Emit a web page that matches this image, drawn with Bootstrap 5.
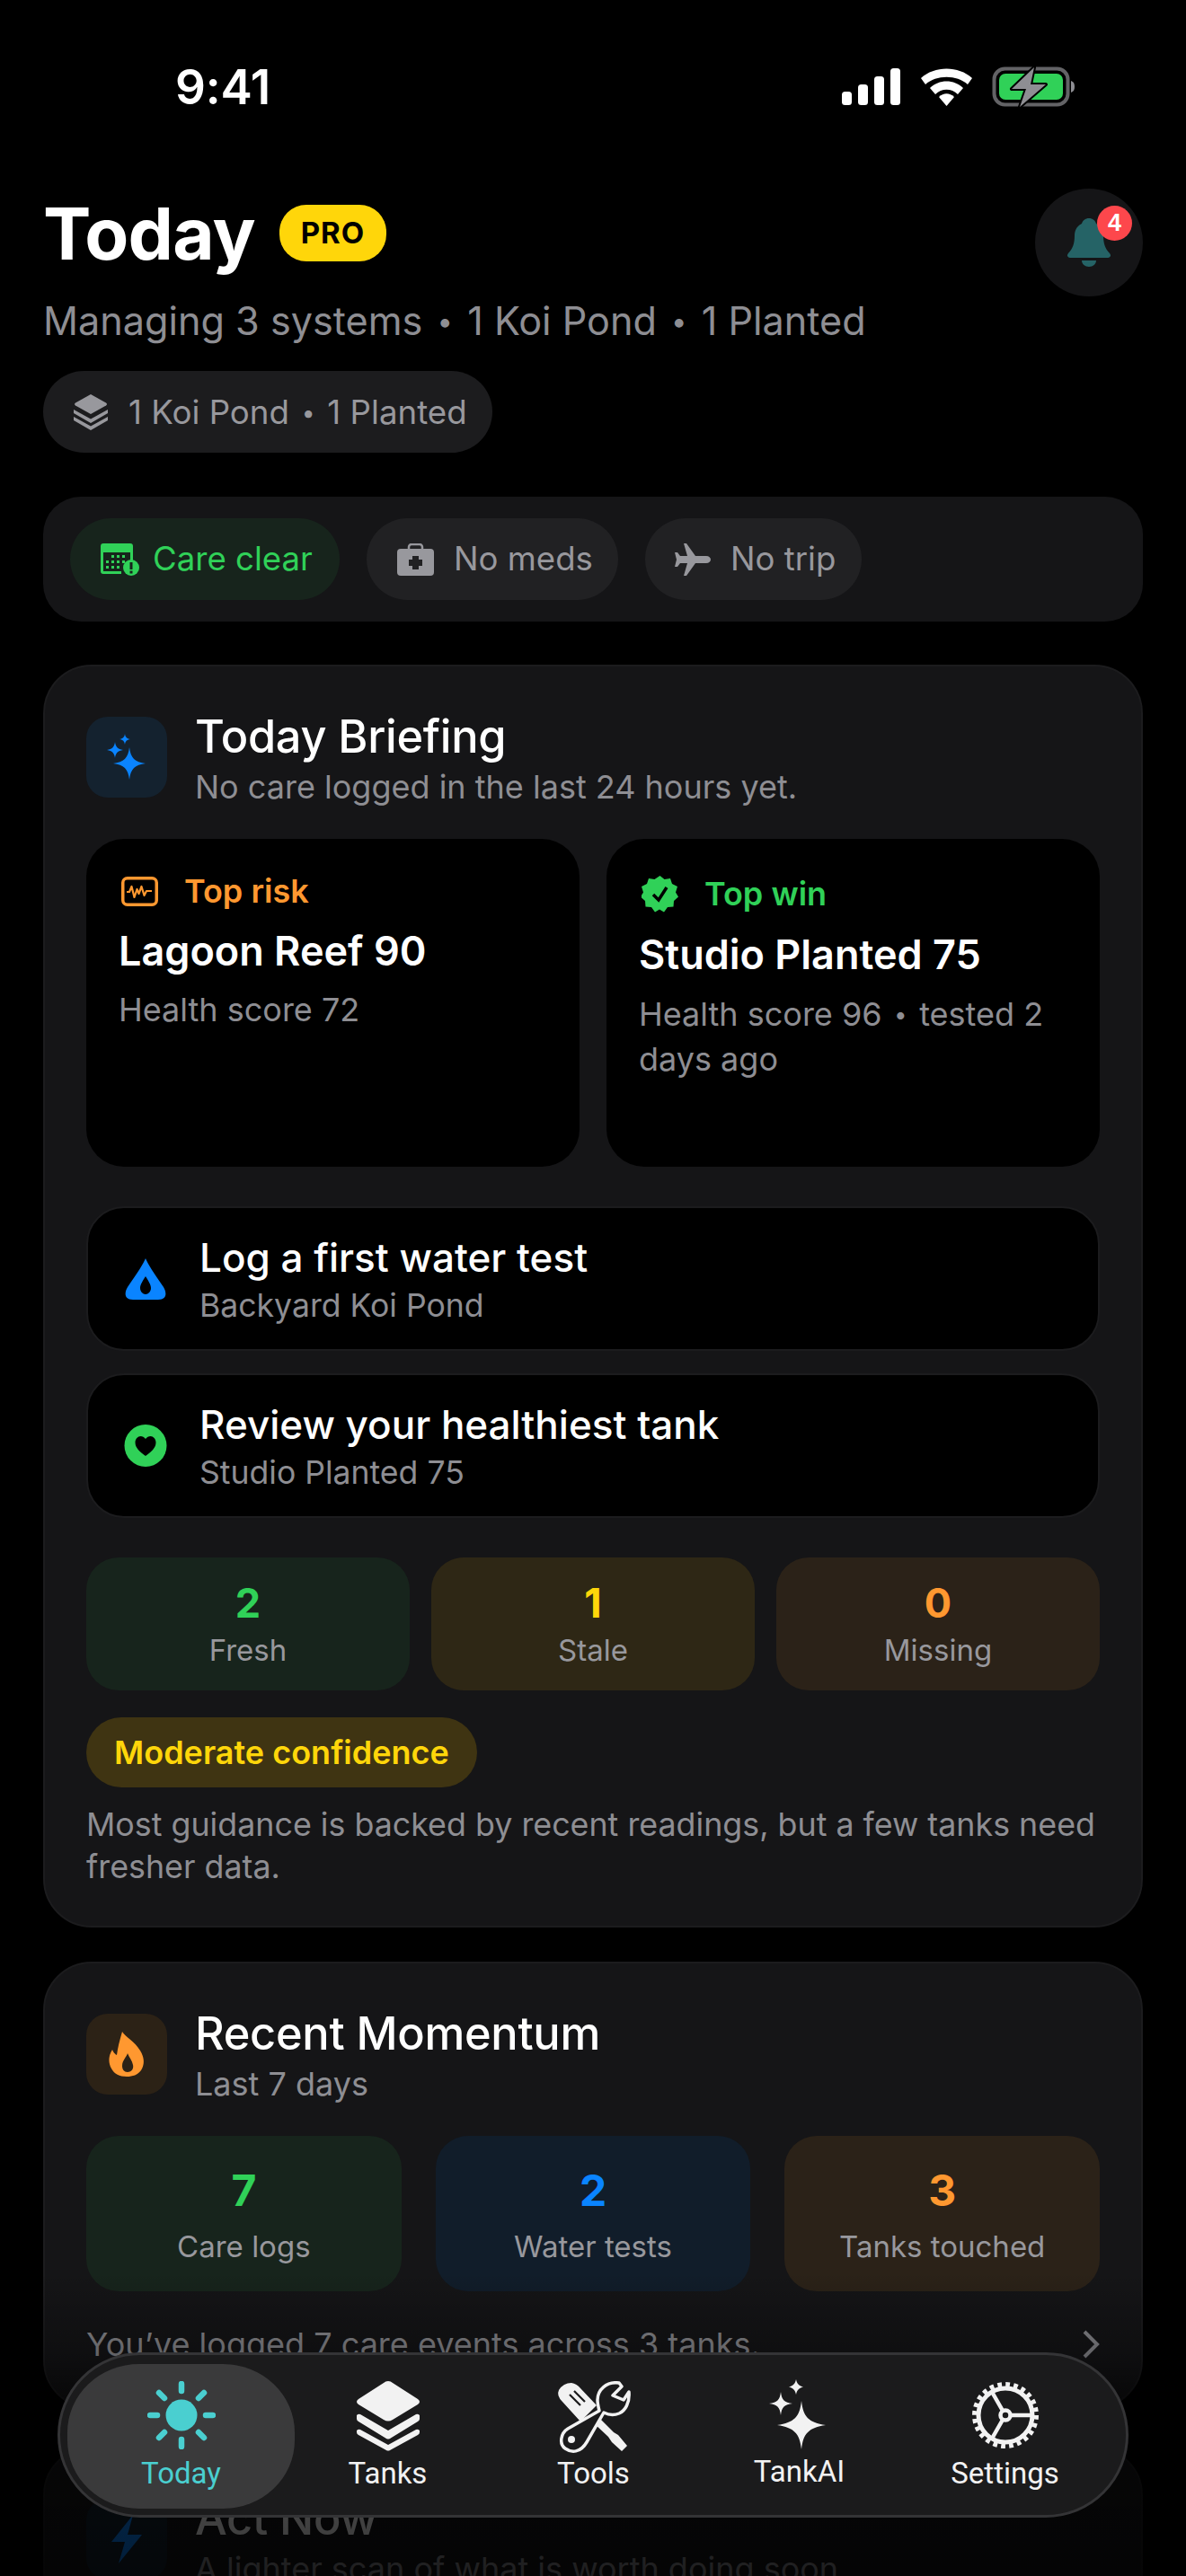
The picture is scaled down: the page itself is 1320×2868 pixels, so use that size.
<!DOCTYPE html>
<html lang="en">
<head>
<meta charset="utf-8">
<title>Today</title>
<link href="https://cdn.jsdelivr.net/npm/bootstrap@5.3.0/dist/css/bootstrap.min.css" rel="stylesheet">
<style>
html,body{background:#000;margin:0;overflow:hidden}
body{font-family:"Inter","Liberation Sans",sans-serif;color:#fff}
.phone{position:relative;width:1320px;height:2868px;overflow:hidden;background:#000}
.statusbar{height:210px;padding:66px 0 0 195px}
.clock{font-size:53px;font-weight:600;line-height:62px;letter-spacing:-.2px}
.status-icons{position:absolute;left:937px;top:74px;width:262px;height:46px}
.content{padding:0 48px}
.hero-title{font-size:80px;font-weight:700;line-height:92px;padding-top:4px;letter-spacing:-.8px}
.pro-tag{background:#ffd60a;color:#000;font-size:33px;font-weight:700;width:119px;height:63px;border-radius:30px;letter-spacing:1px;margin-left:27px;margin-top:3px}
.bell-btn{position:relative;width:120px;height:120px;border-radius:50%;background:#151517;flex:none}
.bell-count{position:absolute;left:69px;top:19px;width:39px;height:39px;border-radius:50%;background:#fd474c;color:#fff;font:700 27px/39px "Liberation Sans",sans-serif;text-align:center;padding:0}
.hero-sub{font-size:43.200px;line-height:54px;color:#8e8e93;margin-top:24px}
.sep-dot{font-size:.72em;line-height:0;vertical-align:.12em;padding:0 .13em}
.sys-pill{height:91px;width:500px;border-radius:46px;background:#1c1c1e;color:#98989d;font-size:36.700px;margin-top:29px;padding-left:34px;gap:23px}
.care-strip{height:139px;background:#151517;border-radius:42px;margin-top:49px;padding:24px 30px;gap:30px}
.care-pill{height:91px;border-radius:46px;background:#212123;color:#98989d;font-size:36.600px;gap:22px}
.care-pill.good{background:#17241c;color:#30d158;gap:14px}
.panel{background:#151517;border:2px solid #1c1c1e;border-radius:54px;padding:56px 46px 0;color:#fff}
.panel-one{height:1406px;margin-top:48px}
.panel-two{height:498px;margin-top:38px}
.panel-three{height:498px;margin-top:42px}
.panel-head{height:90px;gap:31px}
.icon-tile{width:90px;height:90px;border-radius:24px;flex:none}
.tile-blue{background:#14222f}.tile-orange{background:#2c2216}
.panel-title{font-size:50.500px;font-weight:500;line-height:60px;letter-spacing:-.3px;margin-top:-8px}
.panel-sub{font-size:36px;line-height:44px;color:#8e8e93;margin-top:4px}
.top-cards{gap:30px;margin-top:46px}
.top-card{flex:1 1 0;height:365px;background:#000;border-radius:42px;padding:36px}
.top-label{font-size:36px;font-weight:600;line-height:44px;gap:29px;padding-left:3px}
.top-name{font-size:45px;font-weight:600;line-height:56px;margin-top:17px}
.top-detail{font-size:36px;line-height:50px;color:#8e8e93;margin-top:12px}
.act-row{height:161px;background:#000;border:2px solid #1c1c1e;border-radius:42px;padding:0 40px;gap:36px}
.act-row+.act-row{margin-top:25px}
.act-stack{margin-top:44px}
.act-title{font-size:44px;font-weight:500;line-height:56px}
.act-sub{font-size:35.600px;line-height:44px;color:#8e8e93;margin-top:4px}
.tiles{gap:24px;margin-top:44px}
.stat-tile{flex:1 1 0;height:148px;border-radius:36px;text-align:center}
.stat-num{font-size:45px;font-weight:700;line-height:56px;padding-top:23px}
.stat-lab{font-size:33px;line-height:44px;color:#98989d;margin-top:2px}
.tall .stat-tile{height:173px}
.tall{gap:38px;margin-top:46px}
.tall .stat-num{font-size:48px;line-height:60px;padding-top:31px}
.tall .stat-lab{margin-top:10px}
.bg-g{background:#17241c}.bg-y{background:#2e2715}.bg-o{background:#2b2218}.bg-b{background:#111d2a}
.c-g{color:#30d158}.c-y{color:#ffd60a}.c-o{color:#ff9830}.c-b{color:#0a84ff}
.conf-pill{display:inline-flex;align-items:center;height:78px;padding:0 31px;border-radius:39px;background:#3f3412;color:#ffd60a;font-size:36px;font-weight:600;margin-top:30px}
.note{font-size:35.800px;line-height:47px;color:#8e8e93;margin-top:18px}
.foot-line{font-size:36px;line-height:44px;color:#8e8e93;margin-top:37px}
.fade-layer{position:absolute;left:0;right:0;top:2530px;bottom:0;background:linear-gradient(180deg,rgba(0,0,0,0) 0,rgba(0,0,0,.3) 90px,rgba(0,0,0,.68) 150px,rgba(0,0,0,.78) 100%)}
.tabbar{position:absolute;left:64px;top:2619px;width:1192px;height:184px;border-radius:92px;background:#1b1b1c;border:3px solid #343436;padding:10px 8px}
.tab{width:229px;flex:none;text-align:center;font-family:"Roboto","Liberation Sans",sans-serif;font-size:33px;line-height:36px;color:#f2f2f2}
.tab svg{display:block;margin:0 auto}
.tab-on{width:253px;height:161px;border-radius:80px/76px;background:#3a3a3b;color:#4acfd0;margin-right:-11px}
.tab-shift{padding-top:19px}
</style>
</head>
<body>
<div class="phone">
  <div class="statusbar"><div class="clock">9:41</div></div>
  <svg class="status-icons" viewBox="0 0 262 46" aria-hidden="true">
    <g fill="#fff">
      <rect x="0" y="28" width="11" height="15" rx="3.5"/><rect x="18" y="20" width="11" height="23" rx="3.5"/><rect x="36" y="11" width="11" height="32" rx="3.5"/><rect x="54" y="2" width="11" height="41" rx="3.5"/>
      <path d="M88 13C103-1 130-1 145 13L140 20C128 9 105 9 93 20Z"/>
      <path d="M98 24C108 14 125 14 135 24L129 31C122 24 111 24 104 31Z"/>
      <path d="M108 34C113 29 120 29 125 34L116.500 44Z"/>
    </g>
    <rect x="169.500" y="2.500" width="82" height="40" rx="12" fill="none" stroke="#636366" stroke-width="4"/>
    <rect x="175" y="8" width="71" height="29" rx="7" fill="#30d158"/>
    <path d="M255 16c3 1 4 3 4 6.500s-1 5.500-4 6.500z" fill="#8e8e93"/>
    <path d="M214 1L189 25H205L198 45L227 20H210Z" fill="#8e8e93" stroke="#000" stroke-width="4" stroke-linejoin="round" paint-order="stroke"/>
  </svg>

  <main class="content">
    <div class="d-flex justify-content-between align-items-start">
      <div>
        <div class="d-flex align-items-center">
          <div class="hero-title">Today</div>
          <span class="pro-tag d-flex align-items-center justify-content-center">PRO</span>
        </div>
        <div class="hero-sub">Managing 3 systems <span class="sep-dot">•</span> 1 Koi Pond <span class="sep-dot">•</span> 1 Planted</div>
        <div class="sys-pill d-flex align-items-center">
          <svg width="38" height="40" viewBox="0 0 38 40" fill="#98989d" aria-hidden="true"><path d="M19 0L36 9.500Q38 11 36 12.500L19 22L2 12.500Q0 11 2 9.500Z"/><path d="M0 17L19 27.500L38 17V21L19 32L0 21Z"/><path d="M0 25L19 35.500L38 25V29L19 40L0 29Z"/></svg>
          <span>1 Koi Pond <span class="sep-dot">•</span> 1 Planted</span>
        </div>
      </div>
      <div class="bell-btn d-flex align-items-center justify-content-center">
        <svg width="50" height="54" viewBox="0 0 50 54" fill="#256366" aria-hidden="true"><path d="M25 0c4 0 7 2.500 8 6 5 2.500 8 7 8 13 0 9 2 15 7 20 2 2 1 5-2 5H4c-3 0-4-3-2-5 5-5 7-11 7-20 0-6 3-10.500 8-13 1-3.500 4-6 8-6z"/><path d="M17 47h16c0 4-3.500 7-8 7s-8-3-8-7z"/></svg>
        <span class="bell-count">4</span>
      </div>
    </div>

    <div class="care-strip d-flex">
      <div class="care-pill good d-flex align-items-center" style="width:300px;padding-left:34px">
        <svg width="44" height="36" viewBox="0 0 44 36" aria-hidden="true"><path d="M3 0h30a3 3 0 0 1 3 3v17h-3V10H3v21h20v3H3a3 3 0 0 1-3-3V3a3 3 0 0 1 3-3z" fill="#30d158"/><g fill="#30d158"><rect x="12" y="13" width="3" height="3"/><rect x="18" y="13" width="3" height="3"/><rect x="24" y="13" width="3" height="3"/><rect x="6" y="19" width="3" height="3"/><rect x="12" y="19" width="3" height="3"/><rect x="18" y="19" width="3" height="3"/><rect x="24" y="19" width="3" height="3"/><rect x="6" y="25" width="3" height="3"/><rect x="12" y="25" width="3" height="3"/><rect x="18" y="25" width="3" height="3"/></g><circle cx="34" cy="27" r="9" fill="#30d158"/><rect x="32.500" y="21" width="3" height="8" fill="#17241c"/><rect x="32.500" y="30.500" width="3" height="3" fill="#17241c"/></svg>
        <span>Care clear</span>
      </div>
      <div class="care-pill d-flex align-items-center" style="width:280px;padding-left:34px">
        <svg width="41" height="36" viewBox="0 0 41 36" aria-hidden="true"><path d="M13 7V4a3 3 0 0 1 3-3h9a3 3 0 0 1 3 3v3" fill="none" stroke="#98989d" stroke-width="2.500"/><rect y="6" width="41" height="30" rx="4" fill="#98989d"/><path d="M17 14h7v4h4v7h-4v4h-7v-4h-4v-7h4z" fill="#212123"/></svg>
        <span>No meds</span>
      </div>
      <div class="care-pill d-flex align-items-center" style="width:241px;padding-left:32px">
        <svg width="41" height="36" viewBox="0 0 41 36" fill="#98989d" aria-hidden="true"><path d="M11 0h3l10 14h12c3 0 5 2 5 4s-2 4-5 4H24L14 36h-3l4-14H7l-3 4H1l2-8-2-8h3l3 4h8z"/></svg>
        <span>No trip</span>
      </div>
    </div>

    <section class="card panel panel-one">
      <div class="panel-head d-flex">
        <div class="icon-tile tile-blue d-flex align-items-center justify-content-center">
          <svg width="54" height="56" viewBox="0 0 54 56" fill="#0a84ff" aria-hidden="true"><path d="M30 17C31.500 29 36 33.500 48 35 36 36.500 31.500 41 30 53 28.500 41 24 36.500 12 35 24 33.500 28.500 29 30 17Z"/><path d="M14 11C14.700 16.500 17 19 23 20 17 21 14.700 23.500 14 29 13.300 23.500 11 21 5 20 11 19 13.300 16.500 14 11Z"/><path d="M25 2C25.500 5.700 27 7.300 31 8 27 8.700 25.500 10.300 25 14 24.500 10.300 23 8.700 19 8 23 7.300 24.500 5.700 25 2Z"/></svg>
        </div>
        <div>
          <div class="panel-title">Today Briefing</div>
          <div class="panel-sub">No care logged in the last 24 hours yet.</div>
        </div>
      </div>

      <div class="top-cards d-flex">
        <div class="top-card">
          <div class="top-label c-o d-flex align-items-center">
            <svg width="41" height="33" viewBox="0 0 41 33" fill="none" stroke="#ff9830" aria-hidden="true"><rect x="1.750" y="1.750" width="37.500" height="29.500" rx="5" stroke-width="3.500"/><path d="M6 17h3l2.500-6 3 12 3-9 2 5 3-8 3 10 2.500-5h6" stroke-width="2.200" stroke-linejoin="round"/></svg>
            <span>Top risk</span>
          </div>
          <div class="top-name">Lagoon Reef 90</div>
          <div class="top-detail">Health score 72</div>
        </div>
        <div class="top-card">
          <div class="top-label c-g d-flex align-items-center" style="padding-top:3px">
            <svg width="41" height="41" viewBox="0 0 41 41" aria-hidden="true"><path d="M20.500 0l5 4 6.500-1 2 6 6 3-2 6.500 3 5-5 4.500-.5 6.500-6.500.5-4 5.500-5-3-5 3-4-5.500-6.500-.5-.5-6.500-5-4.500 3-5-2-6.500 6-3 2-6 6.500 1z" fill="#30d158"/><path d="M13 21l6 6 9-14" fill="none" stroke="#000" stroke-width="3.500"/></svg>
            <span>Top win</span>
          </div>
          <div class="top-name" style="margin-top:18px">Studio Planted 75</div>
          <div class="top-detail" style="margin-top:13px">Health score 96 <span class="sep-dot">•</span> <span>tested 2</span> <span>days ago</span></div>
        </div>
      </div>

      <div class="act-stack">
        <div class="act-row d-flex align-items-center">
          <svg width="48" height="46" viewBox="0 0 48 46" style="flex:none" aria-hidden="true"><path fill-rule="evenodd" fill="#0a84ff" d="M24 0c3 7 9 16 20 32 3 5 5 14-6 14H10C-1 46 1 37 4 32 15 16 21 7 24 0zM24 20c-3 5-6 9-6 13s3 7 6 7 6-3 6-7-3-8-6-13z"/></svg>
          <div>
            <div class="act-title">Log a first water test</div>
            <div class="act-sub">Backyard Koi Pond</div>
          </div>
        </div>
        <div class="act-row d-flex align-items-center">
          <svg width="48" height="47" viewBox="0 0 47 47" style="flex:none" aria-hidden="true"><circle cx="23.500" cy="23.500" r="23.500" fill="#30d158"/><path d="M23.500 35C17 30 12 26 12 20c0-4 3-7 6-7 2 0 4 1 5.500 3 1.500-2 3.500-3 5.500-3 3 0 6 3 6 7 0 6-5 10-11.500 15z" fill="#000"/></svg>
          <div>
            <div class="act-title">Review your healthiest tank</div>
            <div class="act-sub">Studio Planted 75</div>
          </div>
        </div>
      </div>

      <div class="tiles d-flex">
        <div class="stat-tile bg-g"><div class="stat-num c-g">2</div><div class="stat-lab">Fresh</div></div>
        <div class="stat-tile bg-y"><div class="stat-num c-y">1</div><div class="stat-lab">Stale</div></div>
        <div class="stat-tile bg-o"><div class="stat-num c-o">0</div><div class="stat-lab">Missing</div></div>
      </div>
      <div><span class="conf-pill">Moderate confidence</span></div>
      <p class="note mb-0">Most guidance is backed by recent readings, but a few tanks need fresher data.</p>
    </section>

    <section class="card panel panel-two">
      <div class="panel-head d-flex">
        <div class="icon-tile tile-orange d-flex align-items-center justify-content-center">
          <svg width="40" height="50" viewBox="0 0 40 50" aria-hidden="true"><path fill-rule="evenodd" fill="#ff9830" d="M15 0c4 6 14 11 20 21 5 8 5 16 1 22-4 5-9 7-16 7-8 0-14-3-17-9-4-7-3-15 1-21 1 3 3 5 5 6 1-8 3-16 6-26zM21 24c-1 4-6 8-6 14 0 4 2 7 6 7s7-3 6-8c-1-5-4-8-6-13z"/></svg>
        </div>
        <div>
          <div class="panel-title">Recent Momentum</div>
          <div class="panel-sub">Last 7 days</div>
        </div>
      </div>
      <div class="tiles tall d-flex">
        <div class="stat-tile bg-g"><div class="stat-num c-g">7</div><div class="stat-lab">Care logs</div></div>
        <div class="stat-tile bg-b"><div class="stat-num c-b">2</div><div class="stat-lab">Water tests</div></div>
        <div class="stat-tile bg-o"><div class="stat-num c-o">3</div><div class="stat-lab">Tanks touched</div></div>
      </div>
      <div class="foot-line d-flex justify-content-between align-items-center">
        <span>You’ve logged 7 care events across 3 tanks.</span>
        <svg width="20" height="32" viewBox="0 0 20 32" fill="none" stroke="#8e8e93" stroke-width="4" aria-hidden="true"><path d="M3 2l14 14L3 30"/></svg>
      </div>
    </section>

    <section class="card panel panel-three">
      <div class="panel-head d-flex">
        <div class="icon-tile tile-blue d-flex align-items-center justify-content-center">
          <svg width="34" height="54" viewBox="0 0 34 54" fill="#0a84ff" aria-hidden="true"><path d="M24 0L0 30H15L8 54L34 22H18Z"/></svg>
        </div>
        <div>
          <div class="panel-title">Act Now</div>
          <div class="panel-sub">A lighter scan of what is worth doing soon.</div>
        </div>
      </div>
    </section>
  </main>

  <div class="fade-layer"></div>

  <nav class="tabbar d-flex align-items-start">
    <div class="tab tab-on tab-shift">
      <svg width="76" height="76" viewBox="0 0 76 76" aria-hidden="true"><circle cx="38" cy="38" r="17.500" fill="#4acfd0"/><g stroke="#4acfd0" stroke-width="6.500" stroke-linecap="round"><path d="M38 3v8M38 65v8M3 38h8M65 38h8M13 13l6 6M57 57l6 6M13 63l6-6M57 19l6-6"/></g></svg>
      <div style="margin-top:9px">Today</div>
    </div>
    <div class="tab tab-shift">
      <svg width="72" height="78" viewBox="0 0 72 78" fill="#f2f2f2" aria-hidden="true"><path d="M36 0Q39 0 41 2L69 20Q73 23 69 26L41 43Q36 46 31 43L3 26Q-1 23 3 20L31 2Q33 0 36 0Z"/><path d="M1 38Q3 36 5 37L36 55 67 37Q69 36 71 38V42Q71 44 69 45L38 64Q36 65 34 64L3 45Q1 44 1 42Z"/><path d="M1 55Q3 53 5 54L36 71 67 54Q69 53 71 55V57Q71 59 69 60L38 77Q36 78 34 77L3 60Q1 59 1 57Z"/></svg>
      <div style="margin-top:7px">Tanks</div>
    </div>
    <div class="tab tab-shift">
      <svg width="84" height="82" viewBox="37 22 84 82" aria-hidden="true"><path d="M40 32Q45 24 54 24 60 25 64 30L82 49 64 67 44 45Q37 38 40 32Z" fill="#f2f2f2"/><path d="M52 37L64 49M57 33L69 45" stroke="#1b1b1c" stroke-width="2.200"/><path d="M84 62L101 79 106 82 116 94 110 100 99 90 95 84 78 68Z" fill="#f2f2f2"/><path d="M107 24C93 22 83 32 83 43 83 47 84 51 85 55L50 75C42 80 40 92 47 97 54 102 64 102 71 90L90 57C96 60 102 60 107 58 114 55 119 46 118 34L112 43 100 38 110 28Z" fill="#1b1b1c" stroke="#f2f2f2" stroke-width="3.500" stroke-linejoin="round"/><circle cx="54" cy="87" r="4" fill="#f2f2f2"/></svg>
      <div style="margin-top:3px">Tools</div>
    </div>
    <div class="tab tab-shift">
      <svg width="76" height="84" viewBox="0 0 76 84" fill="#f2f2f2" style="margin-top:-2px" aria-hidden="true"><path d="M40 24C42 42 48 48 67 51 48 54 42 60 40 78 38 60 32 54 13 51 32 48 38 42 40 24Z"/><path d="M17 14C18 23 21 26 30 27 21 28 18 31 17 40 16 31 13 28 4 27 13 26 16 23 17 14Z"/><path d="M34 0C35 5 37 7 42 8.500 37 10 35 12 34 17 33 12 31 10 26 8.500 31 7 33 5 34 0Z"/></svg>
      <div style="margin-top:1px">TankAI</div>
    </div>
    <div class="tab tab-shift">
      <svg width="76" height="76" viewBox="0 0 76 76" fill="none" stroke="#f2f2f2" aria-hidden="true"><circle cx="38" cy="38" r="30" stroke-width="5"/><circle cx="38" cy="38" r="34" stroke-width="6" stroke-dasharray="4.700 4.200"/><circle cx="38" cy="38" r="5.500" stroke-width="4.500"/><path d="M44 38H68M35 33L23 12M35 43L23 64" stroke-width="4.500"/></svg>
      <div style="margin-top:9px">Settings</div>
    </div>
  </nav>
</div>
<script src="https://cdn.jsdelivr.net/npm/bootstrap@5.3.0/dist/js/bootstrap.bundle.min.js"></script>
</body>
</html>
